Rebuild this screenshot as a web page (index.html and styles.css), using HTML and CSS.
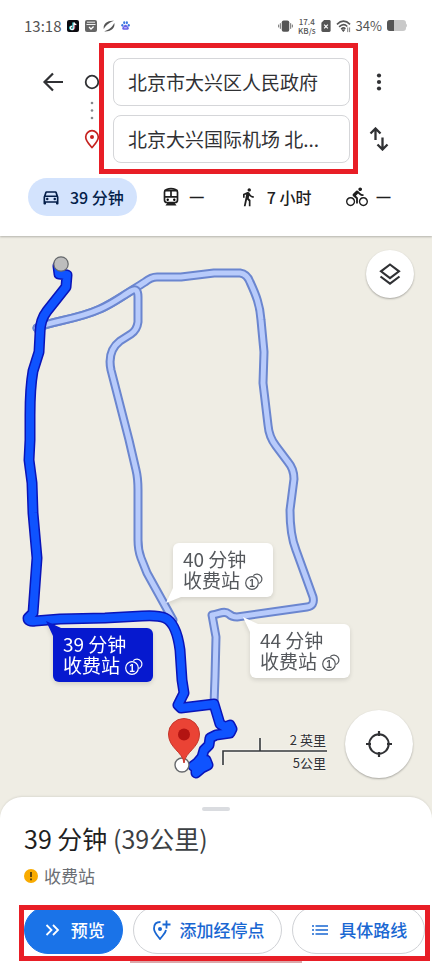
FILE: index.html
```html
<!DOCTYPE html>
<html lang="zh-CN">
<head>
<meta charset="utf-8">
<meta name="viewport" content="width=device-width, initial-scale=1">
<title>路线</title>
<link rel="stylesheet" href="styles.css">
</head>
<body>
<header class="top">
  <div class="status">
    <div class="status-group apps">
      <span class="clock">13:18</span>
      <svg class="s12" viewBox="0 0 12 12"><rect width="12" height="12" rx="2" fill="#0b0b10"/><path d="M6 2.500v5.200a1.600 1.600 0 1 1-1.600-1.500" stroke="#39d5dc" stroke-width="1.500" fill="none"/><path d="M7 2.500v5.300a1.700 1.700 0 1 1-1.700-1.600M7 2.500q.4 2 2.400 2.200" stroke="#fff" stroke-width="1.300" fill="none"/><path d="M7.900 4.800v3q-.2 1.500-1.300 2" stroke="#e8415f" stroke-width=".6" fill="none"/></svg>
      <svg class="s12" viewBox="0 0 12 12"><rect width="12" height="12" rx="2" fill="#666"/><path d="M2 2.200h8M1.500 4.500h9" stroke="#eee" stroke-width="1"/><path d="M4 7l2 2 2.600-2.500" stroke="#fff" stroke-width="1.300" fill="none"/></svg>
      <svg class="s12" viewBox="0 0 12 12"><path d="M.8 9C-.2 4.500 4 .2 11 .8 8 2 3.500 4 .8 9zM11.300 3C12.500 8 7.500 12 1 11.300 6 10 9 7.500 11.300 3z" fill="#555"/></svg>
      <svg class="s8" viewBox="0 0 10 10"><g fill="#3a78e0"><ellipse cx="1.500" cy="4.800" rx="1.200" ry="1.500"/><ellipse cx="3.600" cy="2" rx="1.200" ry="1.600"/><ellipse cx="6.500" cy="2" rx="1.200" ry="1.600"/><ellipse cx="8.600" cy="4.800" rx="1.200" ry="1.500"/></g><path d="M5 4.200c1.500 0 1.800 1.500 3 2.500 1.600 1.600.4 3.300-1.200 3.100H3.200C1.600 10 .6 8.200 2 6.700 3.400 5.700 3.500 4.200 5 4.200z" fill="#6a63e8"/><path d="M3.500 7.500h3" stroke="#fff" stroke-width=".8"/></svg>
    </div>
    <div class="status-group">
      <svg class="s16" viewBox="0 0 16 14"><rect x="4" y="1" width="8" height="12" rx="2" fill="#555"/><path d="M2.500 4v6M13.500 4v6M.7 5.500v3M15.300 5.500v3" stroke="#666"/></svg>
      <span class="speed">17.4<br>KB/s</span>
      <svg class="sim" viewBox="0 0 10 13"><path d="M3 0h5.500Q10 0 10 1.500v10Q10 13 8.500 13h-7Q0 13 0 11.500V3z" fill="#555"/><path d="M3 5l4 4M7 5L3 9" stroke="#fff" stroke-width="1.300"/></svg>
      <svg class="s16" viewBox="0 0 16 14"><g fill="none" stroke="#555" stroke-width="1.700"><path d="M1 5.200Q8-1.500 15 5.200M3.300 8Q8 3.500 12 7.500M5.500 10.300Q8 8 10 10"/></g><path d="M6.300 11h3L7.800 13zM12.500 8.500v5M14.500 8.500v5" stroke="#555" fill="#555" stroke-width=".8"/></svg>
      <span class="percent">34%</span>
      <svg class="battery" viewBox="0 0 21 12"><rect y="0" width="19" height="11" rx="3" fill="#c9c9c9"/><path d="M3 0h4v11H3Q0 11 0 8V3Q0 0 3 0z" fill="#555"/><path d="M19 3.500q2 2 0 4z" fill="#c9c9c9"/></svg>
    </div>
  </div>

  <form class="search">
    <button type="button" class="plain" aria-label="返回"><svg width="22" height="22" viewBox="0 0 22 22"><path d="M21 11H3M11 2.500L2.500 11l8.500 8.500" fill="none" stroke="#303134" stroke-width="2.200"/></svg></button>
    <svg class="stops" viewBox="0 0 38 105"><circle cx="19" cy="24" r="6.300" fill="none" stroke="#303134" stroke-width="1.800"/><g fill="#85888c"><circle cx="19" cy="45" r="1.300"/><circle cx="19" cy="52.500" r="1.300"/><circle cx="19" cy="60" r="1.300"/></g><path d="M19 89.500c-3-3.500-6.300-6.500-6.300-10.500a6.300 6.300 0 0 1 12.600 0c0 4-3.300 7-6.300 10.500z" fill="none" stroke="#c5221f" stroke-width="1.700"/><circle cx="19" cy="79" r="2" fill="#c5221f"/></svg>
    <div class="fields">
      <input type="text" aria-label="起点" value="北京市大兴区人民政府">
      <input type="text" aria-label="终点" value="北京大兴国际机场 北...">
    </div>
    <div class="actions">
      <button type="button" class="plain" aria-label="更多"><svg width="20" height="20" viewBox="0 0 20 20" fill="#303134"><circle cx="10" cy="3.500" r="2.100"/><circle cx="10" cy="10" r="2.100"/><circle cx="10" cy="16.500" r="2.100"/></svg></button>
      <button type="button" class="plain" aria-label="交换"><svg width="20" height="24" viewBox="0 0 20 24"><path d="M6.500 13V2M1.500 6.500l5-5 5 5M13.500 10.500V22M8.500 17.500l5 5 5-5" fill="none" stroke="#303134" stroke-width="2.300"/></svg></button>
    </div>
  </form>

  <nav class="modes">
    <button class="mode selected"><svg width="20" height="20" viewBox="0 0 24 24" fill="#041e49"><path d="M18.920 6.010C18.720 5.420 18.160 5 17.500 5h-11c-.66 0-1.210.42-1.420 1.010L3 12v8c0 .55.45 1 1 1h1c.55 0 1-.45 1-1v-1h12v1c0 .55.45 1 1 1h1c.55 0 1-.45 1-1v-8l-2.080-5.990zM6.850 7h10.290l1.080 3.110H5.770L6.850 7zM19 17H5v-5h14v5z"/><circle cx="7.500" cy="14.500" r="1.500"/><circle cx="16.500" cy="14.500" r="1.500"/></svg>39 分钟</button>
    <button class="mode" aria-label="公交"><svg width="20" height="20" viewBox="0 0 20 20"><path d="M5.500 2.500Q10 .8 14.500 2.500 16.500 3.300 16.500 5v8q0 2.500-2.500 2.500H6Q3.500 15.500 3.500 13V5q0-1.700 2-2.500z" fill="#fff" stroke="#1f1f1f" stroke-width="1.700"/><path d="M3.500 3.700h13M3.500 9.800h13M10 4v6" stroke="#1f1f1f" stroke-width="1.700"/><circle cx="6.700" cy="12.700" r="1.200"/><circle cx="13.300" cy="12.700" r="1.200"/><path d="M4.500 18.500l2-3h7l2 3z" fill="#1f1f1f"/></svg><span class="dash">—</span></button>
    <button class="mode"><svg width="20" height="20" viewBox="0 0 24 24" fill="#1f1f1f"><path d="M13.500 5.500c1.100 0 2-.9 2-2s-.9-2-2-2-2 .9-2 2 .9 2 2 2zM9.800 8.900L7 23h2.100l1.800-8 2.100 2v6h2v-7.500l-2.100-2 .6-3C14.800 12 16.800 13 19 13v-2c-1.900 0-3.500-1-4.300-2.400l-1-1.600c-.4-.6-1-1-1.700-1-.3 0-.5.1-.8.1L6 8.300V13h2V9.600l1.800-.7"/></svg>7 小时</button>
    <button class="mode" aria-label="骑行"><svg width="22" height="22" viewBox="0 0 24 24" fill="#1f1f1f"><path d="M15.500 5.500c1.100 0 2-.9 2-2s-.9-2-2-2-2 .9-2 2 .9 2 2 2zM5 12c-2.800 0-5 2.200-5 5s2.200 5 5 5 5-2.200 5-5-2.200-5-5-5zm0 8.500c-1.900 0-3.500-1.600-3.500-3.500s1.600-3.500 3.500-3.500 3.500 1.600 3.500 3.500-1.600 3.500-3.500 3.500zm5.800-10l2.400-2.400.8.800c1.300 1.300 3 2.100 5.100 2.100V9c-1.500 0-2.700-.6-3.600-1.500l-1.900-1.900c-.5-.4-1-.6-1.600-.6s-1.100.2-1.400.6L7.800 8.400c-.4.4-.6.9-.6 1.400 0 .6.2 1.100.6 1.400L11 14v5h2v-6.200l-2.200-2.300zM19 12c-2.800 0-5 2.200-5 5s2.200 5 5 5 5-2.200 5-5-2.200-5-5-5zm0 8.500c-1.900 0-3.500-1.600-3.500-3.500s1.600-3.500 3.500-3.500 3.500 1.600 3.500 3.500-1.600 3.500-3.500 3.500z"/></svg><span class="dash">—</span></button>
  </nav>
</header>

<main class="map">
  <svg class="routes" viewBox="0 236 432 584">
    <defs>
      <path id="east" d="M37 328C50 321 76 320 100 309C115 302 132 290 145 282Q151 277 157 277H181L214 273H240Q247 274 250 282C256 295 260 305 261 320L264 352 263 383 268 425Q269 437 276 446L288 462Q294 469 294 479L290 510Q290 535 296 550L313 597Q315 606 307 607L237 617Q232 617 229 614C224 610 220 614 212 615L216 637 215 677 214 704"/>
      <path id="middle" d="M37 328C50 321 76 320 100 309C112 304 121 297 131 291Q138 287 138 297V322Q137 330 131 334L120 341Q107 351 111 370L129 440 136 470Q138 478 138 490V540Q138 550 141 558L147 573 173 620"/>
      <path id="west" d="M58 266L59 274 67 275 66 287 47 311Q40 320 40 333L39 352 33 371Q30 388 30 415V440L29 460 32 483 33 513 37 558 33 613 28 618Q28 622 35 621L60 619 105 618 142 616Q158 615 165 618C174 622 178 635 180 650L182 680 184 693 178 705 181 708 214 704 220 724 225 727 230 725 232 729 230 733 216 735 210 738 209 745 204 750 202 757 197 763 193 766M199 762L206 760 208 765 202 768 196 773V765"/>
    </defs>
    <use href="#east" class="alt-edge"/><use href="#east" class="alt"/>
    <use href="#middle" class="alt-edge"/><use href="#middle" class="alt"/>
    <use href="#west" class="main-edge"/><use href="#west" class="main"/>
    <circle cx="61" cy="264" r="7.200" fill="#bdbdbd" stroke="#66696c" stroke-width="1.200"/>
    <circle cx="182" cy="765" r="7" fill="#fff" stroke="#66696c" stroke-width="1.400"/>
    <path d="M184 763C183 752 168.500 748 168.500 734a15.500 15.500 0 0 1 31 0C199.500 748 185 752 184 763z" fill="#ea4335" stroke="#c5362b"/>
    <circle cx="184" cy="734.500" r="6" fill="#b31412"/>
    <path d="M223 765V751H327M260 751V738" fill="none" stroke="#fff" stroke-width="3" opacity=".6"/>
    <path d="M223 765V751H327M260 751V738" fill="none" stroke="#34373a" stroke-width="1.600"/>
  </svg>
  <button class="label label-40">40 分钟<br>收费站 <svg class="coin" viewBox="0 0 18 17"><circle cx="7" cy="10" r="6.300"/><path d="M8.300 2.600A5 5 0 1 1 14.200 10.500"/><text x="7" y="13.500">1</text></svg></button>
  <button class="label label-39">39 分钟<br>收费站 <svg class="coin" viewBox="0 0 18 17"><circle cx="7" cy="10" r="6.300"/><path d="M8.300 2.600A5 5 0 1 1 14.200 10.500"/><text x="7" y="13.500">1</text></svg></button>
  <button class="label label-44">44 分钟<br>收费站 <svg class="coin" viewBox="0 0 18 17"><circle cx="7" cy="10" r="6.300"/><path d="M8.300 2.600A5 5 0 1 1 14.200 10.500"/><text x="7" y="13.500">1</text></svg></button>
  <div class="scale">2 英里<br>5公里</div>
  <button class="round layers" aria-label="图层"><svg width="24" height="24" viewBox="0 0 24 24"><path d="M12 2.500l9 6.800-9 6.800-9-6.800zM2.500 14.500l9.500 7.200 9.500-7.200" fill="none" stroke="#303134" stroke-width="2.100"/></svg></button>
  <button class="round locate" aria-label="我的位置"><svg width="28" height="28" viewBox="0 0 28 28"><circle cx="14" cy="14" r="9.700" fill="none" stroke="#303134" stroke-width="2"/><path d="M14 1v5M14 22v5M1 14h5M22 14h5" stroke="#303134" stroke-width="2.200"/></svg></button>
</main>

<section class="sheet">
  <div class="handle"></div>
  <h1>39 分钟 <span>(39公里)</span></h1>
  <p class="toll"><svg width="14" height="14" viewBox="0 0 14 14"><circle cx="7" cy="7" r="7" fill="#f9ab00"/><path d="M7 3v5M7 9.500v1.700" stroke="#3c2f10" stroke-width="1.600"/></svg>收费站</p>
  <div class="buttons">
    <button class="pill primary"><svg width="20" height="20" viewBox="0 0 20 20"><path d="M4.500 5l5 5-5 5M11 5l5 5-5 5" fill="none" stroke="#fff" stroke-width="1.800"/></svg>预览</button>
    <button class="pill"><svg width="20" height="20" viewBox="0 0 20 20"><path d="M9.500 2Q3 2 3 8.500C3 12.500 6.500 15.500 9 19c2.500-3.500 5.500-5.500 6-9" fill="none" stroke="#1967d2" stroke-width="1.800"/><circle cx="9" cy="9" r="2" fill="#1967d2"/><path d="M15.500.5v8M11.500 4.500h8" stroke="#1967d2" stroke-width="1.800"/></svg>添加经停点</button>
    <button class="pill"><svg width="20" height="20" viewBox="0 0 20 20"><path d="M2 6h2M2 10h2M2 14h2M5.500 6H18M5.500 10H18M5.500 14H18" stroke="#1967d2" stroke-width="1.700"/></svg>具体路线</button>
  </div>
  <div class="homebar"></div>
</section>
</body>
</html>
```
FILE: styles.css
```css
* {
  box-sizing: border-box;
}

body {
  margin: 0;
  min-height: 100vh;
  display: flex;
  flex-direction: column;
  background: #fff;
  color: #1f1f1f;
  font-family: "Noto Sans CJK SC", sans-serif;
}

button,
input {
  font: inherit;
  color: inherit;
}

button {
  border: 0;
  padding: 0;
  background: none;
}

svg {
  display: block;
  flex: none;
}

.top {
  position: relative;
  padding-bottom: 20px;
  background: #fff;
  box-shadow: 0 1px 2px rgba(0, 0, 0, .25);
  z-index: 1;
}

/* Status bar */
.status {
  display: flex;
  justify-content: space-between;
  height: 58px;
  padding: 0 24px 7px;
  color: #555;
}

.status-group {
  display: flex;
  align-items: center;
  gap: 5px;
}

.apps {
  gap: 6px;
}

.clock {
  font-size: 15px;
}

.s12 {
  width: 12px;
  height: 12px;
}

.s8 {
  width: 9px;
  height: 9px;
}

.s16 {
  width: 15px;
  height: 14px;
}

.sim {
  width: 10px;
  height: 12px;
}

.battery {
  width: 21px;
  height: 12px;
}

.speed {
  font-size: 8px;
  line-height: 9px;
  font-weight: 500;
  text-align: center;
}

.percent {
  font-size: 13px;
}

/* Search */
.search {
  display: grid;
  grid-template-columns: 40px 38px 1fr 58px;
  padding: 0 24px 0 33px;
}

.plain {
  display: flex;
  align-items: center;
  justify-content: center;
  height: 48px;
}

.stops {
  width: 38px;
  height: 105px;
}

.fields {
  position: relative;
  display: grid;
  gap: 9px;
  margin-left: 2px;
}

.fields::after {
  content: "";
  position: absolute;
  inset: -15px -8px -11px -14px;
  border: 5px solid #e81e26;
  pointer-events: none;
}

.fields input {
  width: 100%;
  height: 48px;
  padding: 0 14px 2px;
  border: 1px solid #d5d6d9;
  border-radius: 8px;
  background: #fff;
  color: #303134;
  font-size: 19px;
}

.actions {
  display: grid;
  gap: 9px;
}

/* Travel modes */
.modes {
  display: flex;
  gap: 14px;
  margin-top: 15px;
  padding-left: 28px;
}

.mode {
  display: flex;
  align-items: center;
  gap: 9px;
  height: 38px;
  padding: 0 10px 1px;
  border-radius: 19px;
  font-size: 16px;
  font-weight: 500;
  white-space: nowrap;
}

.selected {
  padding: 0 13px 1px;
  background: #d3e3fd;
  color: #041e49;
}

.dash {
  font-family: "Liberation Sans", sans-serif;
  font-size: 14px;
  font-weight: 700;
}

/* Map */
.map {
  position: relative;
  flex: 1;
  background: #efede4;
}

.routes {
  width: 100%;
}

.routes use {
  fill: none;
  stroke-linejoin: round;
  stroke-linecap: round;
}

.alt-edge {
  stroke: #6b86cf;
  stroke-width: 9px;
}

.alt {
  stroke: #b8cbfb;
  stroke-width: 5px;
}

.main-edge {
  stroke: #0a14b8;
  stroke-width: 11px;
}

.main {
  stroke: #0f53ff;
  stroke-width: 8px;
}

.label {
  position: absolute;
  padding: 5px 10px 7px;
  border-radius: 6px;
  background: #fff;
  color: #55585c;
  font-size: 19px;
  line-height: 21px;
  text-align: left;
  white-space: nowrap;
  filter: drop-shadow(0 2px 2px rgba(0, 0, 0, .12));
}

.label::before {
  content: "";
  position: absolute;
  left: -7px;
  top: -7px;
  width: 15px;
  height: 15px;
  background: inherit;
  clip-path: polygon(0 0, 100% 7px, 7px 100%);
}

.label-40 {
  left: 173px;
  top: 307px;
}

.label-40::before {
  top: 45px;
  clip-path: polygon(0 100%, 7px 0, 100% 9px);
}

.label-39 {
  left: 53px;
  top: 392px;
  background: #0619cf;
  color: #fff;
}

.label-44 {
  left: 250px;
  top: 388px;
}

.coin {
  display: inline-block;
  width: 18px;
  height: 17px;
  margin-left: 1px;
  vertical-align: -2px;
  fill: none;
  stroke: currentColor;
  stroke-width: 1.2px;
}

.coin text {
  fill: currentColor;
  stroke: none;
  font-family: "Liberation Sans", sans-serif;
  font-size: 10px;
  font-weight: 700;
  text-anchor: middle;
}

.scale {
  position: absolute;
  right: 106px;
  top: 492px;
  color: #303134;
  font-size: 13px;
  line-height: 23px;
  text-align: right;
  text-shadow: 0 0 2px #fff;
}

.round {
  position: absolute;
  display: flex;
  align-items: center;
  justify-content: center;
  border-radius: 50%;
  background: #fff;
  box-shadow: 0 1px 2px rgba(0, 0, 0, .3);
}

.layers {
  top: 14px;
  right: 18px;
  width: 48px;
  height: 48px;
}

.locate {
  top: 474px;
  right: 19px;
  width: 68px;
  height: 68px;
}

/* Bottom sheet */
.sheet {
  position: relative;
  margin-top: -23px;
  padding: 10px 0;
  border-radius: 22px 22px 0 0;
  background: #fff;
  box-shadow: 0 -1px 2px rgba(0, 0, 0, .08);
}

.handle {
  width: 28px;
  height: 4px;
  margin: 0 auto;
  border-radius: 2px;
  background: #dadce0;
}

h1 {
  margin: 9px 24px 8px;
  font-size: 25px;
  line-height: 36px;
  font-weight: 400;
}

h1 span {
  color: #3c4043;
}

.toll {
  display: flex;
  align-items: center;
  gap: 6px;
  margin: 0 24px 18px;
  color: #6b6e73;
  font-size: 17px;
  line-height: 24px;
}

.buttons {
  position: relative;
  display: flex;
  gap: 10px;
  margin: 0 7px 0 24px;
}

.buttons::after {
  content: "";
  position: absolute;
  inset: -1px -5px -7px;
  border: 5px solid #e81e26;
  pointer-events: none;
}

.pill {
  display: flex;
  align-items: center;
  justify-content: center;
  gap: 9px;
  flex: 1 1 auto;
  height: 48px;
  padding: 0 15px 1px;
  border: 1px solid #d0d2d6;
  border-radius: 24px;
  background: #fff;
  color: #1967d2;
  font-size: 17px;
  font-weight: 500;
  white-space: nowrap;
}

.primary {
  border-color: #1a73e8;
  background: #1a73e8;
  color: #fff;
}

.homebar {
  position: absolute;
  left: 50%;
  bottom: 1px;
  width: 172px;
  height: 2px;
  margin-left: -86px;
  background: #dca9ab;
}
```
